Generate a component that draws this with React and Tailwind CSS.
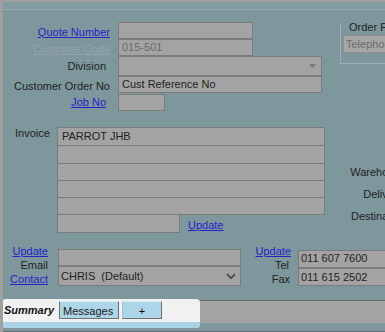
import React from 'react';

const field = 'bg-[#a3a3a3] border border-[#7b7b7b] shrink-0';
const link = 'text-[#2424c6] underline';

function Arrow() {
  return (
    <svg width="7" height="4" viewBox="0 0 7 4" className="shrink-0">
      <path d="M0 0 L7 0 L3.5 4 Z" fill="#7a7a7a" />
    </svg>
  );
}

function Chevron() {
  return (
    <svg width="10" height="7" viewBox="0 0 10 7" className="shrink-0">
      <path d="M1 1.2 L5 5.2 L9 1.2" fill="none" stroke="#4d4d4d" strokeWidth="1.8" />
    </svg>
  );
}

function Row({ label, labelClass = '', h, children, className = '' }) {
  return (
    <div className={`flex items-center ${h} ${className}`}>
      <div className={`w-[107px] shrink-0 text-right leading-[13px] ${labelClass}`}>{label}</div>
      <div className="ml-[8px] flex">{children}</div>
    </div>
  );
}

export default function App() {
  return (
    <div className="w-[385px] h-[332px] overflow-hidden bg-[#7d979d] border-l-[3px] border-[#a0a0a0] flex flex-col font-['Liberation_Sans',Arial,sans-serif] text-[11px] text-[#1f1f1f]">
      {/* top frame */}
      <div className="h-[2px] bg-[#a0a0a0] shrink-0" />
      <div className="h-[8px] bg-[#819ba1] border-b border-[#93abb0] shrink-0" />

      {/* header fields */}
      <div className="flex items-start shrink-0">
        <div className="w-[337px] shrink-0 pt-[12px] flex flex-col">
          <Row h="h-[17px]" labelClass="pt-[3px]" label={<span className={link}>Quote Number</span>}>
            <div className={`${field} w-[135px] h-[17px]`} />
          </Row>
          <Row h="h-[17px]" labelClass="pt-[3px]" label={<span className="text-[#94a5a9] underline">Customer Code</span>}>
            <div className={`${field} w-[135px] h-[17px] px-[3px] leading-[15px] text-[#6a6a6a]`}>015-501</div>
          </Row>
          <Row h="h-[20px]" labelClass="pr-[4px]" label="Division">
            <div className={`${field} w-[204px] h-[20px] flex items-center justify-end pr-[5px]`}>
              <Arrow />
            </div>
          </Row>
          <Row h="h-[17px]" labelClass="pt-[3px]" label="Customer Order No">
            <div className={`${field} w-[204px] h-[17px] px-[3px] leading-[15px]`}>Cust Reference No</div>
          </Row>
          <Row h="h-[17px]" className="mt-[1px]" labelClass="pr-[4px]" label={<span className={link}>Job No</span>}>
            <div className={`${field} w-[47px] h-[17px]`} />
          </Row>
        </div>

        {/* order placed group */}
        <div className="mt-[13px] w-[60px] h-[41px] shrink-0 border-l border-b border-[#9bb1b6] flex flex-col">
          <div className="pl-[8px] -mt-[2px] leading-[13px] h-[13px] whitespace-nowrap">Order Placed</div>
          <div className="mt-[1px] ml-[2px] h-[18px] w-[60px] bg-[#a6a6a6] border border-[#8d8d8d] px-[2px] leading-[16px] text-[#6b6b6b] whitespace-nowrap overflow-hidden">
            Telephone
          </div>
        </div>
      </div>

      {/* invoice block */}
      <div className="mt-[16px] flex items-start shrink-0">
        <div className="w-[54px] shrink-0 pl-[12px] leading-[13px]">Invoice</div>
        <div className="w-[268px] shrink-0 flex flex-col">
          <div className="border-t border-l border-r border-[#7b7b7b] bg-[#a3a3a3] flex flex-col">
            <div className="h-[18px] border-b border-[#7b7b7b] px-[4px] leading-[17px]">PARROT JHB</div>
            <div className="h-[18px] border-b border-[#7b7b7b]" />
            <div className="h-[17px] border-b border-[#7b7b7b]" />
            <div className="h-[17px] border-b border-[#7b7b7b]" />
            <div className="h-[17px] border-b border-[#7b7b7b]" />
          </div>
          <div className="flex items-end">
            <div className="w-[123px] h-[18px] bg-[#a3a3a3] border-l border-r border-b border-[#7b7b7b] shrink-0" />
            <span className={`${link} ml-[8px] leading-[13px] mb-[1px]`}>Update</span>
          </div>
        </div>
        <div className="w-[81px] shrink-0 pt-[34px] flex flex-col items-end">
          <div className="h-[22px] flex items-center">Warehouse</div>
          <div className="h-[22px] flex items-center pr-[3px]">Delivery</div>
          <div className="h-[22px] flex items-center">Destination</div>
        </div>
      </div>

      {/* contact block */}
      <div className="mt-[11px] flex items-start shrink-0">
        <div className="w-[45px] shrink-0 flex flex-col items-end leading-[14px]">
          <span className={link}>Update</span>
          <span>Email</span>
          <span className={link}>Contact</span>
        </div>
        <div className="ml-[10px] mt-[5px] w-[183px] shrink-0 flex flex-col">
          <div className={`${field} h-[17px]`} />
          <div className={`${field} h-[20px] flex items-center justify-between pl-[2px] pr-[4px]`}>
            <span className="whitespace-pre">CHRIS  (Default)</span>
            <Chevron />
          </div>
        </div>
        <div className="w-[50px] shrink-0 flex flex-col items-end leading-[14px]">
          <span className={link}>Update</span>
          <span className="pr-[2px]">Tel</span>
          <span className="pr-[1px]">Fax</span>
        </div>
        <div className="ml-[7px] mt-[6px] w-[100px] shrink-0 flex flex-col">
          <div className={`${field} h-[18px] px-[2px] leading-[14px]`}>011 607 7600</div>
          <div className={`${field} h-[18px] px-[2px] leading-[17px]`}>011 615 2502</div>
        </div>
      </div>

      {/* tab strip */}
      <div className="mt-[13px] -ml-px flex items-start shrink-0">
        <div className="w-[198px] h-[29px] shrink-0 bg-[#f1f1f1] rounded-[4px] overflow-hidden flex flex-col">
          <div className="h-[23px] flex items-start">
            <div className="w-[57px] shrink-0 pl-[2px] pt-[5px] leading-[13px] font-bold italic text-[#111]">Summary</div>
            <div className="mt-[2px] w-[60px] h-[18px] shrink-0 bg-[#acd5e7] border border-[#6f6f6f] border-t-[#dcecf3] px-[3px] pt-[3px] leading-[13px] text-[#1a1a1a]">
              Messages
            </div>
            <div className="ml-[3px] mt-[2px] w-[40px] h-[18px] shrink-0 bg-[#acd5e7] border border-[#6f6f6f] border-t-[#dcecf3] border-l-[#9cc2d2] flex items-center justify-center pt-[2px] text-[#111]">
              +
            </div>
          </div>
          <div className="h-[6px] bg-[#a9d3e4]" />
        </div>
        <div className="flex-1 mt-[1px] h-[23px] border-t border-[#6b6b6b] bg-[#a3a3a3]" />
      </div>

      {/* lower edge */}
      <div className="h-[3px] shrink-0" />
      <div className="flex-1 border-t border-[#5f6f73] flex">
        <div className="ml-[50px] w-[40px] border-l border-[#5f5f5f] bg-[#a3a3a3]" />
      </div>
    </div>
  );
}
